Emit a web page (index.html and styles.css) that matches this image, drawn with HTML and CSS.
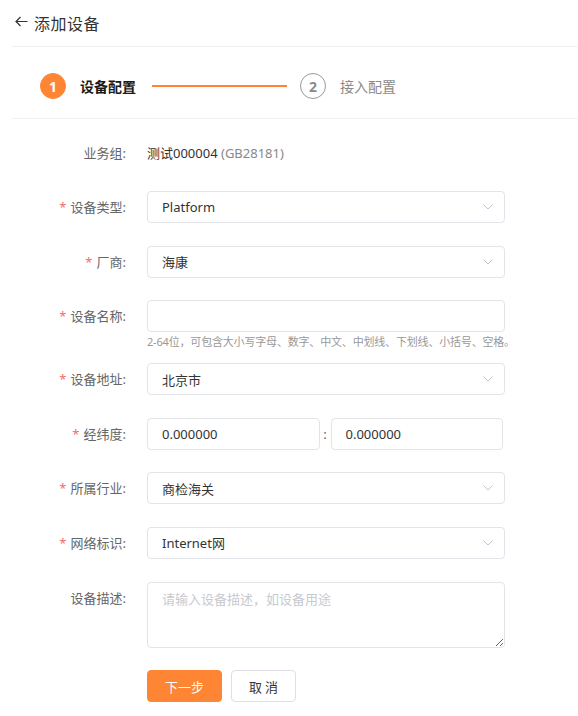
FILE: index.html
```html
<!DOCTYPE html>
<html lang="zh-CN">
<head>
<meta charset="utf-8">
<title>添加设备</title>
<link rel="stylesheet" href="styles.css">
</head>
<body>
<div class="page">
  <div class="header">
    <svg class="back" width="13" height="11" viewBox="0 0 13 11"><path d="M5.5 1 L1 5.5 L5.5 10 M1 5.5 H12.5" fill="none" stroke="#333" stroke-width="1.2"/></svg>
    <span class="title">添加设备</span>
  </div>
  <div class="steps">
    <div class="step active"><span class="num">1</span><span class="step-text">设备配置</span></div>
    <div class="step-line"></div>
    <div class="step"><span class="num">2</span><span class="step-text">接入配置</span></div>
  </div>
  <form class="form">
    <div class="item">
      <label class="label">业务组:</label>
      <div class="control plain">测试000004 <span class="muted">(GB28181)</span></div>
    </div>
    <div class="item">
      <label class="label"><span class="req">*</span>设备类型:</label>
      <div class="control select"><span>Platform</span><svg class="chev" width="10" height="6" viewBox="0 0 10 6"><path d="M0.5 0.5 L5 5 L9.5 0.5" fill="none" stroke="#c0c4cc" stroke-width="1"/></svg></div>
    </div>
    <div class="item">
      <label class="label"><span class="req">*</span>厂商:</label>
      <div class="control select"><span>海康</span><svg class="chev" width="10" height="6" viewBox="0 0 10 6"><path d="M0.5 0.5 L5 5 L9.5 0.5" fill="none" stroke="#c0c4cc" stroke-width="1"/></svg></div>
    </div>
    <div class="item with-help">
      <label class="label"><span class="req">*</span>设备名称:</label>
      <div class="control-wrap">
        <input class="control input" type="text">
        <div class="help">2-64位，可包含大小写字母、数字、中文、中划线、下划线、小括号、空格。</div>
      </div>
    </div>
    <div class="item">
      <label class="label"><span class="req">*</span>设备地址:</label>
      <div class="control select"><span>北京市</span><svg class="chev" width="10" height="6" viewBox="0 0 10 6"><path d="M0.5 0.5 L5 5 L9.5 0.5" fill="none" stroke="#c0c4cc" stroke-width="1"/></svg></div>
    </div>
    <div class="item">
      <label class="label"><span class="req">*</span>经纬度:</label>
      <div class="latlng">
        <input class="control input half" type="text" value="0.000000">
        <span class="sep">:</span>
        <input class="control input half" type="text" value="0.000000">
      </div>
    </div>
    <div class="item">
      <label class="label"><span class="req">*</span>所属行业:</label>
      <div class="control select"><span>商检海关</span><svg class="chev" width="10" height="6" viewBox="0 0 10 6"><path d="M0.5 0.5 L5 5 L9.5 0.5" fill="none" stroke="#c0c4cc" stroke-width="1"/></svg></div>
    </div>
    <div class="item">
      <label class="label"><span class="req">*</span>网络标识:</label>
      <div class="control select"><span>Internet网</span><svg class="chev" width="10" height="6" viewBox="0 0 10 6"><path d="M0.5 0.5 L5 5 L9.5 0.5" fill="none" stroke="#c0c4cc" stroke-width="1"/></svg></div>
    </div>
    <div class="item">
      <label class="label">设备描述:</label>
      <textarea class="control textarea" placeholder="请输入设备描述，如设备用途"></textarea>
    </div>
    <div class="item buttons">
      <button type="button" class="btn primary">下一步</button>
      <button type="button" class="btn">取 消</button>
    </div>
  </form>
</div>
</body>
</html>
```

FILE: styles.css
```css
* { box-sizing: border-box; }
html, body { margin: 0; padding: 0; background: #fff; }
body {
  font-family: "Noto Sans", "Noto Sans CJK SC", sans-serif;
  color: #333;
  font-size: 13px;
}
.page { padding-left: 12px; }

.header {
  height: 47px;
  border-bottom: 1px solid #f0f0f0;
  display: flex;
  align-items: center;
  padding-left: 3px;
  padding-bottom: 1px;
}
.back { display: block; margin-right: 6px; margin-top: -2px; }
.title { font-size: 16px; letter-spacing: 0.5px; color: #333; font-family: "Noto Sans CJK SC", sans-serif; }

.steps {
  display: flex;
  align-items: center;
  height: 72px;
  padding: 26px 0 19px 28px;
  border-bottom: 1px solid #f2f2f2;
}
.step { display: flex; align-items: center; }
.num {
  width: 26px; height: 26px;
  border-radius: 50%;
  border: 1.5px solid #999;
  color: #8a8a8a;
  font-weight: bold;
  font-size: 14px;
  display: flex; align-items: center; justify-content: center;
  font-family: "Noto Sans", sans-serif;
}
.step.active .num { background: #fd8533; border-color: #fd8533; color: #fff; }
.step-text { margin-left: 14px; font-size: 14px; color: #8a8a8a; font-family: "Noto Sans CJK SC", sans-serif; }
.step.active .step-text { color: #1a1a1a; font-weight: bold; }
.step-line { width: 135px; height: 1.5px; background: #fd8533; margin: 0 13px 0 16px; }

.form { padding-top: 18px; }
.item { display: flex; align-items: flex-start; margin-bottom: 22.6px; }
.item:first-child { margin-bottom: 22px; }
.item.with-help { margin-bottom: 11px; }
.label {
  width: 114px;
  margin-right: 21px;
  text-align: right;
  line-height: 32px;
  color: #666;
  font-size: 13px;
  flex: none;
  white-space: nowrap;
}
.req { color: #f56c6c; margin-right: 4px; }

.control {
  width: 358px;
  height: 32px;
  border: 1px solid #e2e4ea;
  border-radius: 4px;
  background: #fff;
  font: inherit;
  font-size: 13px;
  color: #333;
  padding: 0 11px 0 14px;
  outline: none;
}
.plain { border: none; padding: 0; line-height: 32px; color: #333; }
.muted { color: #888; }
.select { display: flex; align-items: center; justify-content: space-between; }
.chev { display: block; }
.control-wrap { display: flex; flex-direction: column; }
.help { font-size: 11px; color: #999; line-height: 20px; letter-spacing: -0.18px; white-space: nowrap; }

.latlng { display: flex; width: 356px; }
.half { flex: 1; width: auto; min-width: 0; }
.sep { width: 11px; text-align: center; line-height: 32px; color: #666; flex: none; }

.textarea {
  height: 66px;
  padding: 6px 14px;
  line-height: 20px;
  resize: vertical;
  display: block;
}
.textarea::placeholder { color: #c8cacf; }

.buttons { padding-left: 135px; gap: 9px; }
.btn {
  height: 32px;
  border-radius: 4px;
  font-family: "Noto Sans CJK SC", sans-serif;
  font-size: 13px;
  border: 1px solid #dcdfe6;
  background: #fff;
  color: #333;
  width: 65px;
  padding: 0;
  cursor: pointer;
}
.btn.primary { width: 75px; background: #fd8533; border-color: #fd8533; color: #fff; }
```
